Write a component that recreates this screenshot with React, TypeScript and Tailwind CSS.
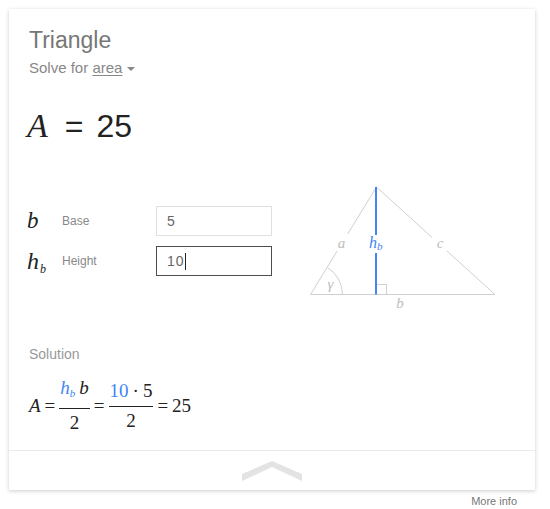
import React from "react";

const sans = { fontFamily: '"Liberation Sans", Arial, sans-serif' };
const serif = { fontFamily: '"Liberation Serif", "Times New Roman", serif' };

function TriangleDiagram() {
  return (
    <svg width="230" height="150" viewBox="0 0 230 150" className="block shrink-0">
      <g stroke="#d0d0d0" strokeWidth="1" fill="none">
        <line x1="20.5" y1="124.5" x2="86.5" y2="17" />
        <line x1="86.5" y1="17" x2="205" y2="124.5" />
        <line x1="20.5" y1="124.5" x2="205" y2="124.5" />
        <path d="M 52.5 124.5 A 32 32 0 0 0 37.5 97.5" />
        <rect x="86.5" y="114.5" width="10" height="10" />
      </g>
      <rect x="44" y="64" width="15" height="17" fill="white" />
      <rect x="142" y="64" width="15" height="17" fill="white" />
      <line x1="86" y1="17" x2="86" y2="65" stroke="#4285f4" strokeWidth="2" />
      <line x1="86" y1="83" x2="86" y2="124.5" stroke="#4285f4" strokeWidth="2" />
      <g style={serif} fontStyle="italic" fontSize="15" fill="#bdbdbd">
        <text x="51.5" y="78" textAnchor="middle">a</text>
        <text x="150" y="78" textAnchor="middle">c</text>
        <text x="110" y="138" textAnchor="middle">b</text>
        <text x="40.5" y="119" textAnchor="middle">γ</text>
      </g>
      <g style={serif} fontStyle="italic" fill="#4285f4">
        <text x="79" y="78" fontSize="16">h</text>
        <text x="87" y="80" fontSize="11">b</text>
      </g>
    </svg>
  );
}

function Fraction({ top, bottom }: { top: React.ReactNode; bottom: React.ReactNode }) {
  return (
    <div className="flex flex-col items-center">
      <div className="px-[1px] pb-[5px] leading-[20px] whitespace-nowrap">{top}</div>
      <div className="h-px w-full bg-[#222]" />
      <div className="pt-[4px] leading-[20px]">{bottom}</div>
    </div>
  );
}

export default function App() {
  return (
    <div className="w-[550px] h-[509px] bg-white pt-[9px] pl-[9px]" style={sans}>
      <div className="w-[526px] bg-white shadow-[0_1px_4px_rgba(0,0,0,0.2)]">
        <div className="px-5 pt-[17px] pb-[17px]">
          <div className="text-[23px] leading-[28px] text-[#777]">Triangle</div>
          <div className="mt-[5px] text-[15px] leading-[18px] text-[#888] flex items-center">
            <span>Solve for&nbsp;</span>
            <span className="underline underline-offset-2">area</span>
            <span className="ml-[5px] mt-[2px] w-0 h-0 border-l-[4px] border-r-[4px] border-t-[4px] border-l-transparent border-r-transparent border-t-[#888]" />
          </div>
          <div className="mt-[29px] flex items-baseline h-[40px] leading-[40px] text-[#222]">
            <span className="italic text-[34px] -ml-[2px]" style={serif}>A</span>
            <span className="text-[32px] ml-[17px]">=</span>
            <span className="text-[32px] ml-[13px]">25</span>
          </div>

          <div className="mt-[24px] flex h-[150px]">
            <div className="w-[261px] shrink-0 pt-[36px] flex flex-col gap-[10px]">
              <div className="flex items-center h-[30px]">
                <div className="w-[33px] italic text-[23px] text-[#222] -ml-[2px] mr-[2px]" style={serif}>
                  b
                </div>
                <div className="w-[94px] text-[12px] text-[#888]">Base</div>
                <div className="w-[116px] h-[30px] border border-[#e0e0e0] flex items-center pl-[10px] text-[14px] text-[#666]">
                  5
                </div>
              </div>
              <div className="flex items-center h-[30px]">
                <div className="w-[33px] italic text-[#222] -ml-[2px] mr-[2px] flex items-baseline" style={serif}>
                  <span className="text-[24px] leading-[28px]">h</span>
                  <span className="text-[12px] leading-[12px] relative top-[4px] ml-[1px]">b</span>
                </div>
                <div className="w-[94px] text-[12px] text-[#888]">Height</div>
                <div className="w-[116px] h-[30px] border border-[#4d4d4d] flex items-center pl-[10px] text-[14px] text-[#666]">
                  <span className="tracking-[1px]">10</span>
                  <span className="w-px h-[17px] bg-[#222]" />
                </div>
              </div>
            </div>
            <TriangleDiagram />
          </div>

          <div className="mt-[24px] text-[14px] leading-[20px] text-[#999]">Solution</div>
          <div className="mt-[14px] flex items-center gap-[4px] text-[19px] text-[#222]" style={serif}>
            <span className="italic leading-[20px]">A</span>
            <span className="leading-[20px]">=</span>
            <Fraction
              top={
                <span className="italic">
                  <span className="text-[#4285f4]">
                    h<span className="text-[11px] align-[-3px]">b</span>
                  </span>
                  <span className="ml-[4px]">b</span>
                </span>
              }
              bottom="2"
            />
            <span className="leading-[20px]">=</span>
            <Fraction
              top={
                <span>
                  <span className="text-[#4285f4]">10</span>
                  <span className="mx-[4px]">·</span>
                  <span>5</span>
                </span>
              }
              bottom="2"
            />
            <span className="leading-[20px]">=</span>
            <span className="leading-[20px]">25</span>
          </div>
        </div>
        <div className="border-t border-[#ebebeb] h-[40px] flex justify-center pt-[10px]">
          <svg width="60" height="20" viewBox="0 0 60 20">
            <polygon points="0,13 30,0 60,13 60,20 30,6 0,20" fill="#e3e3e3" />
          </svg>
        </div>
      </div>
      <div className="w-[526px] mt-[4px] pr-[18px] text-right text-[11px] leading-[14px] text-[#777]">More info</div>
    </div>
  );
}
